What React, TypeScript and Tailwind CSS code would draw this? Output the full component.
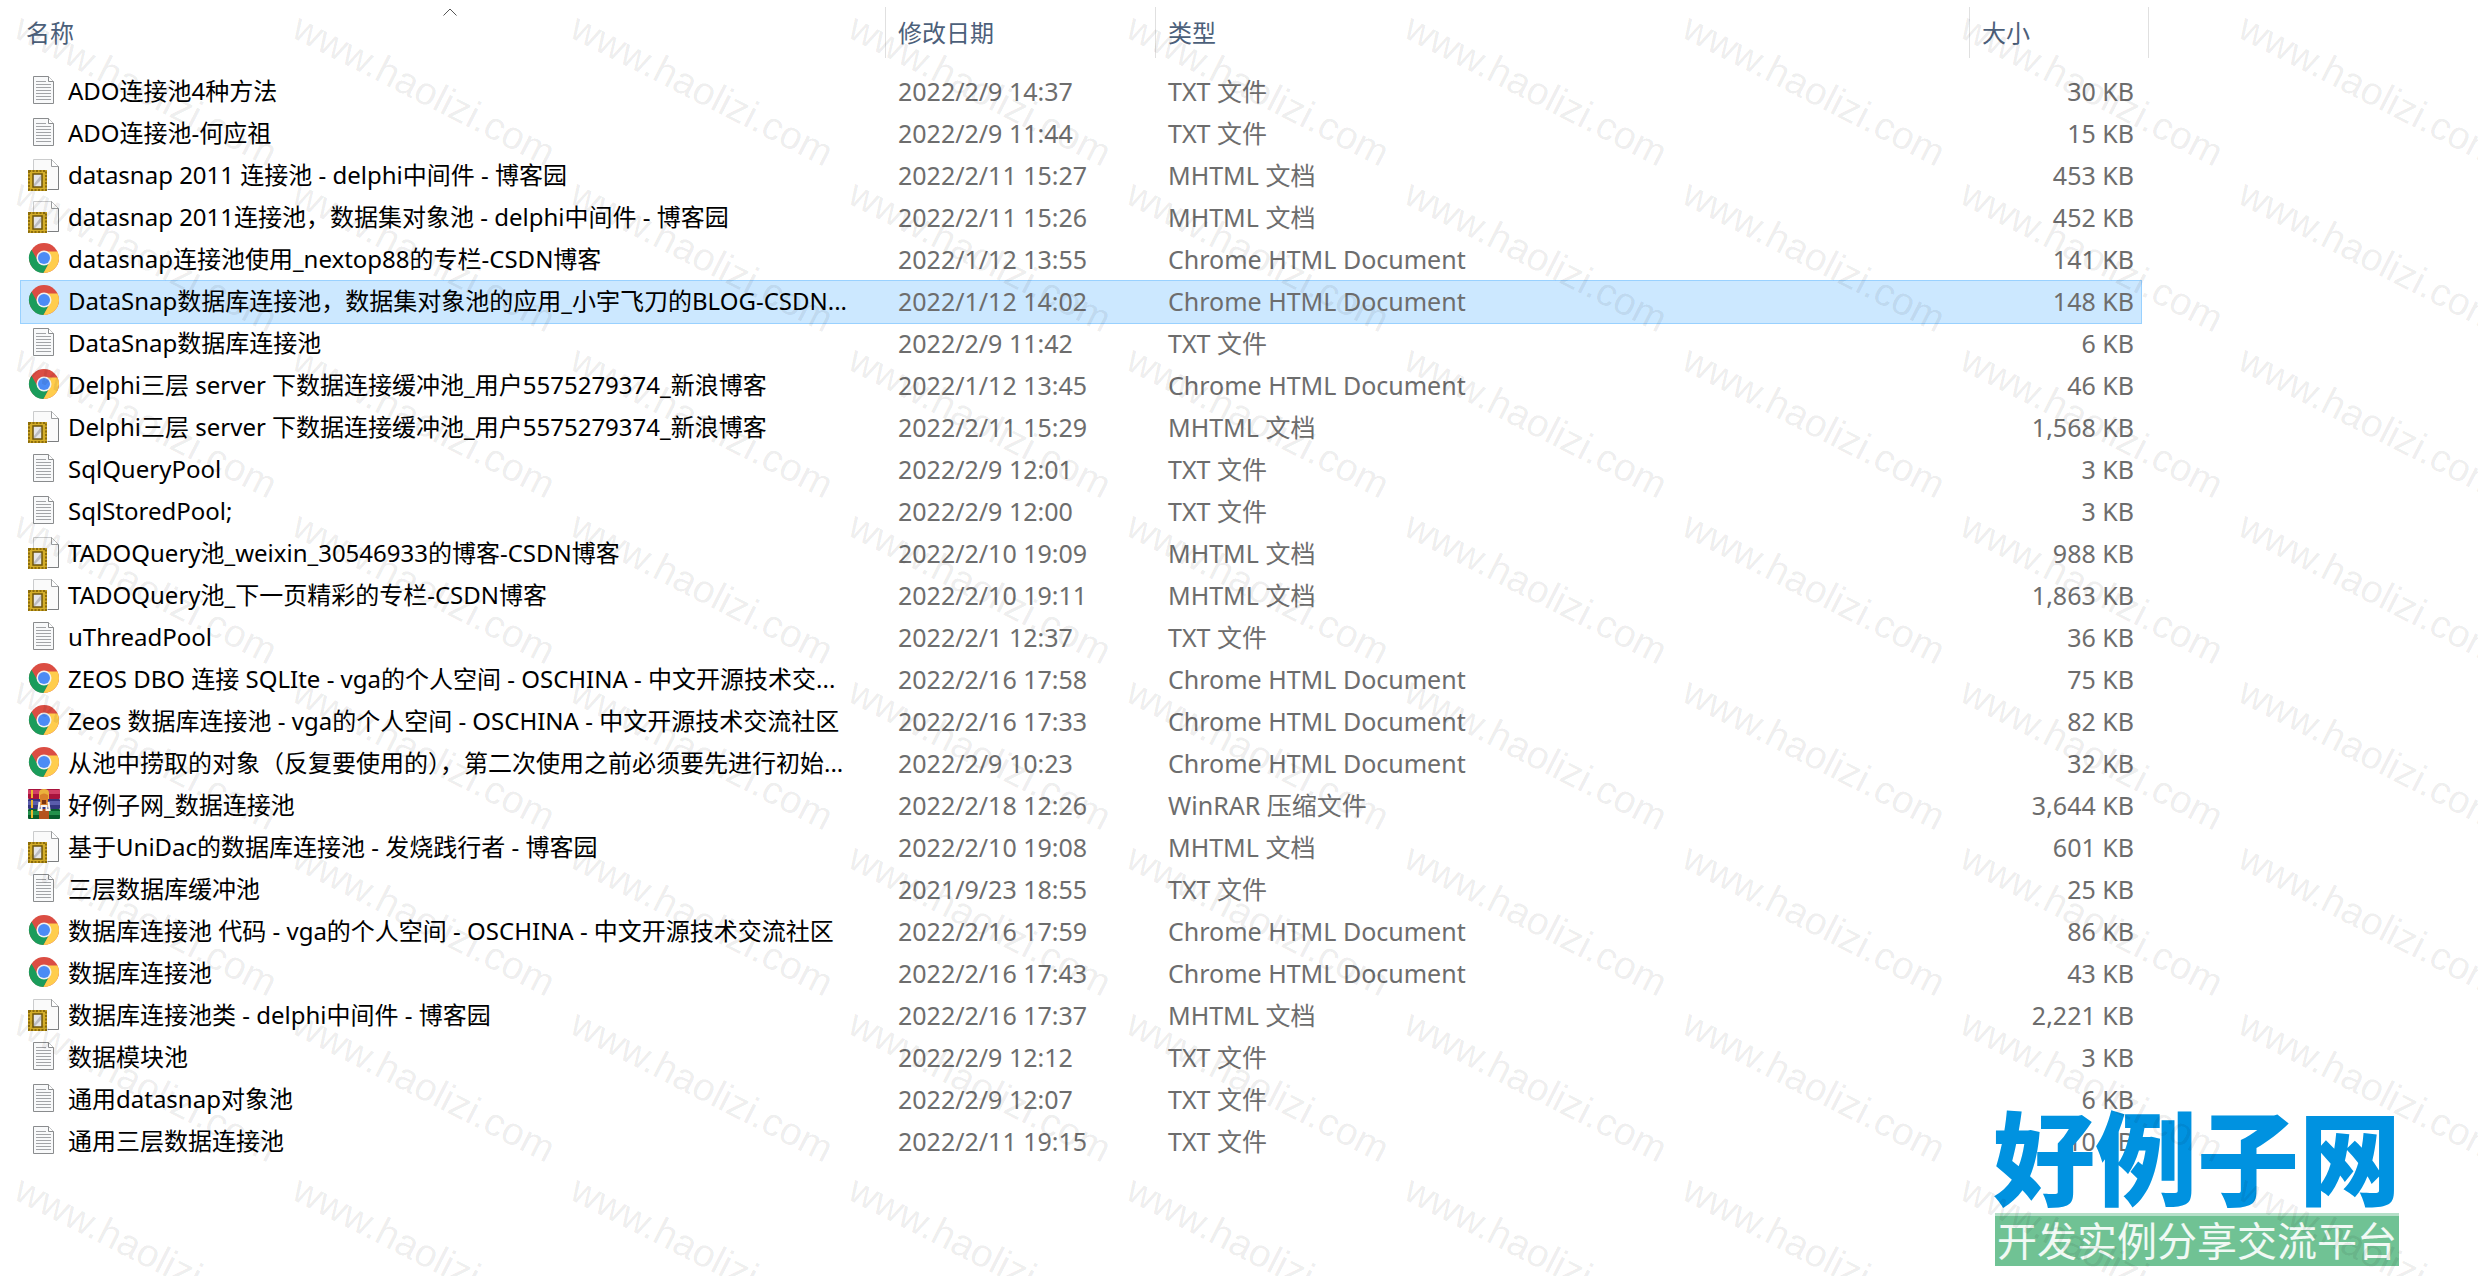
import React from "react";

type Kind = "txt" | "mht" | "chrome" | "rar";
type FileRow = { icon: Kind; name: string; date: string; type: string; size: string; selected?: boolean };

const TYPES: Record<Kind, string> = {
  txt: "TXT 文件",
  mht: "MHTML 文档",
  chrome: "Chrome HTML Document",
  rar: "WinRAR 压缩文件",
};

const row = (icon: Kind, name: string, date: string, size: string, selected = false): FileRow => ({
  icon,
  name,
  date,
  type: TYPES[icon],
  size: `${size} KB`,
  selected,
});

const FILES: FileRow[] = [
  row("txt", "ADO连接池4种方法", "2022/2/9 14:37", "30"),
  row("txt", "ADO连接池-何应祖", "2022/2/9 11:44", "15"),
  row("mht", "datasnap 2011 连接池 - delphi中间件 - 博客园", "2022/2/11 15:27", "453"),
  row("mht", "datasnap 2011连接池，数据集对象池 - delphi中间件 - 博客园", "2022/2/11 15:26", "452"),
  row("chrome", "datasnap连接池使用_nextop88的专栏-CSDN博客", "2022/1/12 13:55", "141"),
  row("chrome", "DataSnap数据库连接池，数据集对象池的应用_小宇飞刀的BLOG-CSDN...", "2022/1/12 14:02", "148", true),
  row("txt", "DataSnap数据库连接池", "2022/2/9 11:42", "6"),
  row("chrome", "Delphi三层 server 下数据连接缓冲池_用户5575279374_新浪博客", "2022/1/12 13:45", "46"),
  row("mht", "Delphi三层 server 下数据连接缓冲池_用户5575279374_新浪博客", "2022/2/11 15:29", "1,568"),
  row("txt", "SqlQueryPool", "2022/2/9 12:01", "3"),
  row("txt", "SqlStoredPool;", "2022/2/9 12:00", "3"),
  row("mht", "TADOQuery池_weixin_30546933的博客-CSDN博客", "2022/2/10 19:09", "988"),
  row("mht", "TADOQuery池_下一页精彩的专栏-CSDN博客", "2022/2/10 19:11", "1,863"),
  row("txt", "uThreadPool", "2022/2/1 12:37", "36"),
  row("chrome", "ZEOS DBO 连接 SQLIte - vga的个人空间 - OSCHINA - 中文开源技术交...", "2022/2/16 17:58", "75"),
  row("chrome", "Zeos 数据库连接池 - vga的个人空间 - OSCHINA - 中文开源技术交流社区", "2022/2/16 17:33", "82"),
  row("chrome", "从池中捞取的对象（反复要使用的），第二次使用之前必须要先进行初始...", "2022/2/9 10:23", "32"),
  row("rar", "好例子网_数据连接池", "2022/2/18 12:26", "3,644"),
  row("mht", "基于UniDac的数据库连接池 - 发烧践行者 - 博客园", "2022/2/10 19:08", "601"),
  row("txt", "三层数据库缓冲池", "2021/9/23 18:55", "25"),
  row("chrome", "数据库连接池 代码 - vga的个人空间 - OSCHINA - 中文开源技术交流社区", "2022/2/16 17:59", "86"),
  row("chrome", "数据库连接池", "2022/2/16 17:43", "43"),
  row("mht", "数据库连接池类 - delphi中间件 - 博客园", "2022/2/16 17:37", "2,221"),
  row("txt", "数据模块池", "2022/2/9 12:12", "3"),
  row("txt", "通用datasnap对象池", "2022/2/9 12:07", "6"),
  row("txt", "通用三层数据连接池", "2022/2/11 19:15", "10"),
];

function TxtIcon() {
  return (
    <svg viewBox="0 0 32 32" className="size-8 shrink-0" aria-hidden="true">
      <path d="M5.5 1.500h15l5 5v22h-20z" fill="#f8f9fa" stroke="#8a8c8e" />
      <path d="M20.5 1.500v5h5" fill="#fff" stroke="#8a8c8e" />
      <path
        d="M8 6.500h10M8 9.500h15M8 12.500h15M8 15.500h15M8 18.500h15M8 21.500h15M8 24.500h15"
        stroke="#a2a4a7"
      />
    </svg>
  );
}

function MhtIcon() {
  return (
    <svg viewBox="0 0 32 32" className="size-8 shrink-0" aria-hidden="true">
      <path d="M5.500 .5h18l7 7v23h-25z" fill="#fafafa" stroke="#cbcccd" />
      <path d="M23.500 .5l7 7v23H20" fill="none" stroke="#7c7e80" />
      <path d="M23.500 .5v7h7" fill="#fff" stroke="#9a9c9e" />
      <rect x="0" y="11" width="19" height="21" fill="#c9a220" />
      <rect x="1" y="12" width="17" height="19" fill="none" stroke="#8d6d0a" strokeWidth="2" strokeDasharray="2 1.500" />
      <rect x="2" y="13" width="15" height="17" fill="#d4ae2a" />
      <rect x="5" y="15" width="9" height="13" fill="#e6e6e8" stroke="#6d540a" strokeWidth="1.500" />
      <path d="M6 25l7-9v5l-6 6H6z" fill="#bcbdc2" />
    </svg>
  );
}

function ChromeIcon() {
  return (
    <svg viewBox="0 0 32 32" className="size-8 shrink-0" aria-hidden="true">
      <circle cx="16" cy="15" r="15" fill="#db4d43" />
      <path d="M3.500 6.700A15 15 0 0 0 15.500 30l6.300-11.600L16 15l-5.800 3.500z" fill="#1a9c5b" />
      <path d="M16 8.500h13.500A15 15 0 0 1 15.500 30l6.300-11.600z" fill="#ffcd4d" />
      <circle cx="16" cy="15" r="7.500" fill="#f1f1f1" />
      <circle cx="16" cy="15" r="6" fill="#4b8bf5" />
    </svg>
  );
}

function RarIcon() {
  return (
    <svg viewBox="0 0 32 32" className="size-8 shrink-0" aria-hidden="true">
      <rect x="0" y="0" width="32" height="10" rx="1" fill="#a8123c" />
      <rect x="0" y="1" width="32" height="4" fill="#d23f66" />
      <rect x="0" y="10" width="32" height="10" rx="1" fill="#34357f" />
      <rect x="0" y="12" width="32" height="4" fill="#5a5cab" />
      <rect x="0" y="20" width="32" height="10" rx="1" fill="#075c2b" />
      <rect x="0" y="22" width="32" height="4" fill="#23904b" />
      <path d="M4 1v8M4 11v8M4 21v8" stroke="#edb72e" strokeWidth="2" />
      <rect x="11" y="20" width="10" height="10" fill="#b4531f" />
      <path d="M11 10V4q0-4 5-4t5 4v6z" fill="#eab13c" />
      <path d="M12 6q4-3 8 0v12h-8z" fill="#d9802a" />
      <path d="M11.500 13l-1 8h3v-4h5v4h3l-1-8" fill="none" stroke="#f8f4ee" strokeWidth="2" />
      <path d="M14 11h4v4h-4z" fill="#7a3310" />
    </svg>
  );
}

const ICONS: Record<Kind, () => React.JSX.Element> = {
  txt: TxtIcon,
  mht: MhtIcon,
  chrome: ChromeIcon,
  rar: RarIcon,
};

const HEADERS = ["修改日期", "类型", "大小"];

function FileTable() {
  return (
    <table className="w-full table-fixed border-collapse">
      <colgroup>
        <col className="w-[864px]" />
        <col className="w-[270px]" />
        <col />
        <col className="w-[172px]" />
      </colgroup>
      <thead>
        <tr className="h-[71px] text-left align-top text-[#4c607a]">
          <th className="relative p-0 font-normal">
            <svg viewBox="0 0 14 8" className="absolute top-2 left-[422px] h-2 w-3.5" aria-hidden="true">
              <path d="M.5 7.500L7 1l6.500 6.500" fill="none" stroke="#555" />
            </svg>
            <button className="mt-[7px] flex h-[51px] w-full items-center pl-[5px]">名称</button>
          </th>
          {HEADERS.map((h, i) => (
            <th key={h} className="relative p-0 font-normal">
              <button className="mt-[7px] flex h-[51px] w-full items-center border-l border-[#e0e0e0] pl-3">{h}</button>
              {i === HEADERS.length - 1 && <span className="absolute top-[7px] -right-2 h-[51px] w-px bg-[#e0e0e0]" />}
            </th>
          ))}
        </tr>
      </thead>
      <tbody>
        {FILES.map((f, i) => {
          const Icon = ICONS[f.icon];
          return (
            <tr
              key={i}
              className={
                f.selected
                  ? "h-[42px] bg-[#cce8ff] text-[25px] text-[#6d6d6d] outline outline-[#99d1ff]"
                  : "h-[42px] text-[25px] text-[#6d6d6d]"
              }
            >
              <td className="p-0 pb-0.5">
                <div className="flex items-center gap-2 pl-[7px] text-2xl leading-8 text-black">
                  <Icon />
                  <span className="whitespace-nowrap">{f.name}</span>
                </div>
              </td>
              <td className="p-0 pb-0.5 pl-[13px] leading-8 whitespace-nowrap">{f.date}</td>
              <td className="p-0 pb-0.5 pl-[13px] leading-8 whitespace-nowrap">{f.type}</td>
              <td className="p-0 pr-[7px] pb-0.5 text-right leading-8 whitespace-nowrap">{f.size}</td>
            </tr>
          );
        })}
      </tbody>
    </table>
  );
}

function Watermark() {
  return (
    <div className="pointer-events-none absolute inset-0 overflow-hidden" aria-hidden="true">
      <div className="grid w-max auto-rows-[166px] grid-cols-[repeat(9,278px)] pt-3.5 pl-[23px]">
        {Array.from({ length: 72 }, (_, i) => (
          <span
            key={i}
            className="origin-top-left rotate-[27deg] font-['Liberation_Sans'] text-[39px] leading-6 whitespace-nowrap text-black/8"
          >
            www.haolizi.com
          </span>
        ))}
      </div>
    </div>
  );
}

function SiteLogo() {
  return (
    <div className="absolute right-[79px] bottom-[10px] flex w-[404px] flex-col">
      <div className="flex h-[108px] items-center justify-center text-[102px] leading-none font-black whitespace-nowrap text-[#0092e0]">
        好例子网
      </div>
      <div className="flex h-[53px] items-center justify-center border-t-3 border-[#b5dfc8] bg-[#70c294] text-[40px] leading-none whitespace-nowrap text-white/90">
        开发实例分享交流平台
      </div>
    </div>
  );
}

export default function App() {
  return (
    <main className="relative min-h-screen overflow-hidden bg-white pr-[337px] pl-[21px] font-['Noto_Sans','Noto_Sans_CJK_SC',sans-serif] text-2xl leading-8">
      <FileTable />
      <SiteLogo />
      <Watermark />
    </main>
  );
}
